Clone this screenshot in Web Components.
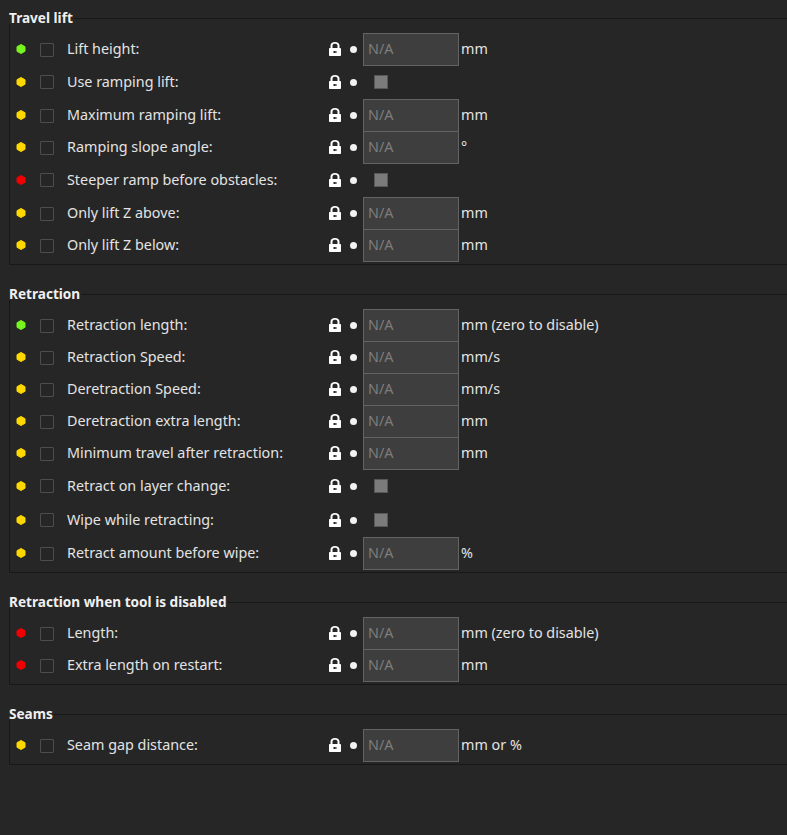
<!DOCTYPE html>
<html>
<head>
<meta charset="utf-8">
<title>Print settings</title>
<style>
  html, body { margin: 0; background: #262626; }
  body { height: 835px; overflow: hidden; font: 14.35px "Noto Sans", "Open Sans", sans-serif; color: #e3e3e3; }
</style>
</head>
<body>
<settings-page>
  <option-group title="Travel lift">
    <option-row state="green" label="Lift height:" unit="mm"></option-row>
    <option-row state="yellow" label="Use ramping lift:" kind="check"></option-row>
    <option-row state="yellow" label="Maximum ramping lift:" unit="mm"></option-row>
    <option-row state="yellow" label="Ramping slope angle:" unit="°"></option-row>
    <option-row state="red" label="Steeper ramp before obstacles:" kind="check"></option-row>
    <option-row state="yellow" label="Only lift Z above:" unit="mm"></option-row>
    <option-row state="yellow" label="Only lift Z below:" unit="mm"></option-row>
  </option-group>
  <option-group title="Retraction">
    <option-row state="green" label="Retraction length:" unit="mm (zero to disable)"></option-row>
    <option-row state="yellow" label="Retraction Speed:" unit="mm/s"></option-row>
    <option-row state="yellow" label="Deretraction Speed:" unit="mm/s"></option-row>
    <option-row state="yellow" label="Deretraction extra length:" unit="mm"></option-row>
    <option-row state="yellow" label="Minimum travel after retraction:" unit="mm"></option-row>
    <option-row state="yellow" label="Retract on layer change:" kind="check"></option-row>
    <option-row state="yellow" label="Wipe while retracting:" kind="check"></option-row>
    <option-row state="yellow" label="Retract amount before wipe:" unit="%"></option-row>
  </option-group>
  <option-group title="Retraction when tool is disabled">
    <option-row state="red" label="Length:" unit="mm (zero to disable)"></option-row>
    <option-row state="red" label="Extra length on restart:" unit="mm"></option-row>
  </option-group>
  <option-group title="Seams">
    <option-row state="yellow" label="Seam gap distance:" unit="mm or %"></option-row>
  </option-group>
</settings-page>

<script>
// page wrapper, stacks the groups
class SettingsPage extends HTMLElement {
  constructor() {
    super();
    const root = this.attachShadow({ mode: 'open' });
    root.innerHTML = `
      <style>
        :host { display: flex; flex-direction: column; gap: 29px; padding: 18px 0 0 9px; }
      </style>
      <slot></slot>
    `;
  }
}

// bordered box with the title sitting on its top edge
class OptionGroup extends HTMLElement {
  constructor() {
    super();
    const root = this.attachShadow({ mode: 'open' });
    root.innerHTML = `
      <style>
        :host { display: block; border: 1px solid #181818; border-right: 0; padding-bottom: 3px; }
        .title {
          width: fit-content;
          height: 14px;
          margin: -9px 0 9px -1px;
          padding-right: 1px;
          background: #262626;
          font-weight: 700;
          font-size: 13.6px;
          line-height: 16px;
          color: #f0f0f0;
        }
      </style>
      <div class="title"></div>
      <slot></slot>
    `;
    root.querySelector('.title').textContent = this.getAttribute('title');
    this.removeAttribute('title');
  }
}

const STATE_COLORS = { green: '#76f51f', yellow: '#ffd800', red: '#f00000' };

// one setting: state dot, checkbox, label, lock, bullet, value, unit
class OptionRow extends HTMLElement {
  constructor() {
    super();
    const root = this.attachShadow({ mode: 'open' });
    const isCheck = this.getAttribute('kind') === 'check';
    const color = STATE_COLORS[this.getAttribute('state')];
    const value = isCheck ? '<span class="square"></span>' : '<span class="field">N/A</span>';
    root.innerHTML = `
      <style>
        :host {
          display: grid;
          grid-template-columns: 30px 27px 262px 21px 13px 96px auto;
          align-items: center;
          justify-items: start;
          height: ${isCheck ? 34 : 32}px;
        }
        svg { display: block; }
        .state { margin-left: 6px; }
        .box { width: 12px; height: 12px; margin-top: ${isCheck ? 0 : 2}px; border: 1px solid #4d4d4d; border-radius: 1px; }
        .label { margin-bottom: 2px; white-space: nowrap; }
        .bullet { width: 7px; height: 7px; border-radius: 50%; background: #f2f2f2; }
        .field {
          box-sizing: border-box;
          width: 96px;
          height: 33px;
          margin-bottom: -1px;
          padding-left: 4px;
          border: 1px solid #636363;
          background: #3e3e3e;
          color: #7d7d7d;
          line-height: 29px;
        }
        .square {
          width: 12px;
          height: 12px;
          margin-left: 11px;
          border: 1px solid #585858;
          background: #7b7b7b;
        }
        .unit { margin-bottom: 2px; padding-left: 2px; white-space: nowrap; }
      </style>
      <svg class="state" width="10" height="10" viewBox="0 0 10 10"><path fill="${color}" stroke="${color}" stroke-linejoin="round" d="M5 .5l4 2.200v4.600L5 9.500 1 7.300V2.700z"/></svg>
      <span class="box"></span>
      <span class="label">${this.getAttribute('label')}</span>
      <svg width="12" height="14" viewBox="0 0 12 14"><path fill="#fff" fill-rule="evenodd" d="M1.5 6V3.5C1.5 1.2 3.4 0 6 0s4.500 1.200 4.500 3.500V6h.5c.6 0 1 .4 1 1v6c0 .6-.4 1-1 1H1c-.6 0-1-.4-1-1V7c0-.6.4-1 1-1zM3.500 6h5V3.600C8.500 2.400 7.400 1.800 6 1.800S3.500 2.400 3.500 3.600zM4.500 9v2h2v-.5h1.500v-1H6.500V9z"/></svg>
      <span class="bullet"></span>
      ${value}
      <span class="unit">${this.getAttribute('unit') || ''}</span>
    `;
  }
}

customElements.define('settings-page', SettingsPage);
customElements.define('option-group', OptionGroup);
customElements.define('option-row', OptionRow);
</script>
</body>
</html>
